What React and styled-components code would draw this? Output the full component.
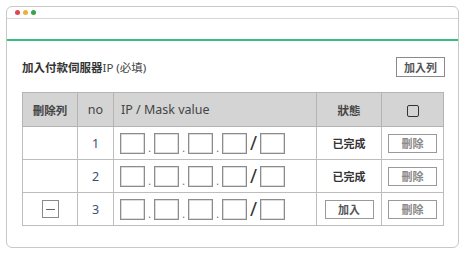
import React from 'react';
import styled, { createGlobalStyle } from 'styled-components';

const Global = createGlobalStyle`
    body {
        margin: 0;
        background: #fff;
        font-family: "Noto Sans", "Noto Sans CJK TC", sans-serif;
    }
`

const rows = [
    { no: 1, done: true },
    { no: 2, done: true },
    { no: 3, done: false },
];

const IpField = () => (
    <IpRow>
        <Box /><Dot>.</Dot>
        <Box /><Dot>.</Dot>
        <Box /><Dot>.</Dot>
        <Box /><Slash>/</Slash>
        <Box />
    </IpRow>
);

const App = () => {
    return (
        <Page>
            <Global />
            <Window>
                <TitleBar>
                    <Light color="#e0474c" />
                    <Light color="#e9b13c" />
                    <Light color="#3aa547" />
                </TitleBar>
                <Toolbar />
                <Content>
                    <Heading>
                        <h2>加入付款伺服器<span>IP (必填)</span></h2>
                        <AddRow>加入列</AddRow>
                    </Heading>
                    <Table>
                        <colgroup>
                            <col style={{ width: 55 }} />
                            <col style={{ width: 36 }} />
                            <col style={{ width: 203 }} />
                            <col style={{ width: 65 }} />
                            <col style={{ width: 62 }} />
                        </colgroup>
                        <thead>
                            <tr>
                                <Th bold>刪除列</Th>
                                <Th>no</Th>
                                <Th left>IP / Mask value</Th>
                                <Th bold>狀態</Th>
                                <Th><Check /></Th>
                            </tr>
                        </thead>
                        <tbody>
                            {rows.map(r => (
                                <tr key={r.no}>
                                    <Td>{!r.done && <Minus />}</Td>
                                    <Td num>{r.no}</Td>
                                    <Td left><IpField /></Td>
                                    <Td>{r.done ? <Status>已完成</Status> : <SmallButton dark>加入</SmallButton>}</Td>
                                    <Td><SmallButton>刪除</SmallButton></Td>
                                </tr>
                            ))}
                        </tbody>
                    </Table>
                </Content>
            </Window>
        </Page>
    );
}

const Page = styled.div`
    padding: 6px 6px 0 6px;
    width: 453px;
`

const Window = styled.div`
    border: 1.5px solid #c8c8c8;
    border-radius: 6px;
    height: 242px;
    box-sizing: border-box;
    overflow: hidden;
`

const TitleBar = styled.div`
    height: 11px;
    display: flex;
    align-items: center;
    gap: 3px;
    padding-left: 8px;
    border-bottom: 1px solid #d6d6d6;
`

const Light = styled.span`
    width: 5px;
    height: 5px;
    border-radius: 50%;
    background: ${p => p.color};
`

const Toolbar = styled.div`
    height: 20px;
    border-bottom: 2px solid #35bd83;
`

const Content = styled.div`
    padding: 16px 13px 0 15px;
`

const Heading = styled.div`
    display: flex;
    align-items: center;
    justify-content: space-between;
    height: 20px;
    margin-bottom: 15px;
    h2{
        margin: 0;
        font-size: 11.5px;
        font-weight: 700;
        color: #333;
        span{
            font-weight: 400;
            color: #444;
        }
    }
`

const AddRow = styled.button`
    width: 49px;
    height: 20px;
    padding: 0;
    background: #fff;
    border: 1.5px solid #8a8a8a;
    border-radius: 0;
    font-family: inherit;
    font-size: 11px;
    font-weight: 700;
    color: #555;
`

const Table = styled.table`
    width: 421px;
    border-collapse: collapse;
    table-layout: fixed;
    border: 1.5px solid #a8a8a8;
`

const Th = styled.th`
    height: 33px;
    background: #d4d4d4;
    border: 1px solid #b4b4b4;
    font-size: ${p => p.bold ? '11.5px' : '12.5px'};
    font-weight: ${p => p.bold ? 700 : 400};
    color: #444;
    text-align: ${p => p.left ? 'left' : 'center'};
    padding: ${p => p.left ? '0 0 0 7px' : '0'};
    vertical-align: middle;
`

const Td = styled.td`
    height: 32px;
    border: 1px solid #bdbdbd;
    text-align: ${p => p.left ? 'left' : 'center'};
    padding: ${p => p.left ? '0 0 0 6px' : '0'};
    font-size: 12.5px;
    color: #3b4f73;
    vertical-align: middle;
`

const Check = styled.span`
    display: inline-block;
    width: 10px;
    height: 10px;
    border: 1.5px solid #333;
    border-radius: 2px;
    vertical-align: middle;
`

const IpRow = styled.div`
    display: flex;
    align-items: center;
`

const Box = styled.span`
    width: 23px;
    height: 19px;
    border: 1px solid #8c8c8c;
    box-shadow: inset 0 0 0 0.5px #bbb;
`

const Dot = styled.span`
    width: 9px;
    text-align: center;
    font-size: 10px;
    color: #666;
    align-self: flex-end;
    line-height: 12px;
`

const Slash = styled.span`
    width: 13px;
    text-align: center;
    font-size: 19px;
    line-height: 20px;
    color: #333;
`

const Status = styled.span`
    font-size: 11px;
    font-weight: 700;
    color: #333;
`

const SmallButton = styled.button`
    width: 49px;
    height: 19px;
    padding: 0;
    background: #fff;
    border: 1.5px solid #9a9a9a;
    border-radius: 0;
    font-family: inherit;
    font-size: 11px;
    font-weight: 700;
    color: ${p => p.dark ? '#555' : '#8a8a8a'};
    vertical-align: middle;
`

const Minus = styled.span`
    display: inline-flex;
    align-items: center;
    justify-content: center;
    width: 15px;
    height: 16px;
    border: 1.5px solid #8a8a8a;
    vertical-align: middle;
    &::after{
        content: '';
        width: 9px;
        height: 1px;
        background: #666;
    }
`

export default App;
